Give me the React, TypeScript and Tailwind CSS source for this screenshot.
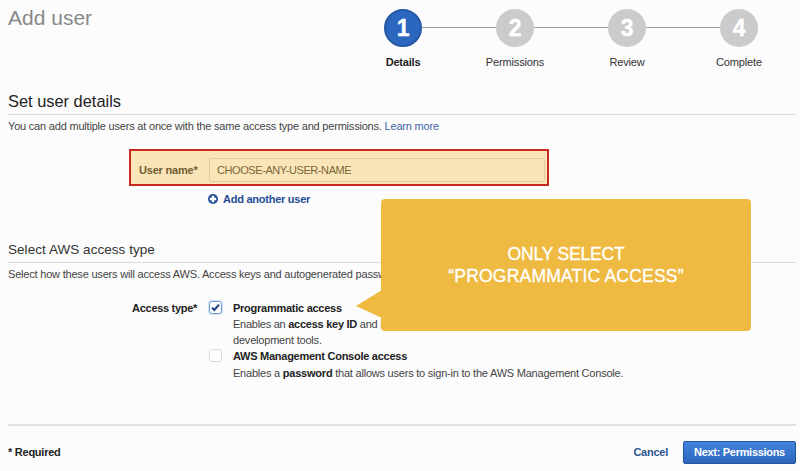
import React from 'react';

const steps = [
  { n: 1, label: 'Details', active: true },
  { n: 2, label: 'Permissions', active: false },
  { n: 3, label: 'Review', active: false },
  { n: 4, label: 'Complete', active: false },
];

function Stepper() {
  return (
    <ol className="flex">
      {steps.map((s, i) => (
        <li key={s.n} className="flex w-28 flex-col items-center">
          <div className="flex w-full items-center">
            <span className={i > 0 ? '-mt-px h-px flex-1 bg-[#999]' : 'h-px flex-1'} />
            <span
              className={
                s.active
                  ? 'flex size-[38px] items-center justify-center rounded-full border-2 border-[#2558a5] bg-[#2b67bf] text-[23px] font-bold text-white [-webkit-text-stroke:0.4px_white]'
                  : 'flex size-[38px] items-center justify-center rounded-full bg-[#cbcbcb] text-[23px] font-bold text-white [-webkit-text-stroke:0.4px_white]'
              }
            >
              {s.n}
            </span>
            <span className={i < steps.length - 1 ? '-mt-px h-px flex-1 bg-[#999]' : 'h-px flex-1'} />
          </div>
          <span className={s.active ? 'mt-[7px] leading-4 font-bold text-[#222]' : 'mt-[7px] leading-4 tracking-[-0.15px] text-[#333]'}>{s.label}</span>
        </li>
      ))}
    </ol>
  );
}

function CheckBox({ checked }: { checked: boolean }) {
  return (
    <span
      className={
        checked
          ? 'mt-px flex size-[13px] items-center justify-center rounded-[3px] border border-[#6f9ad6] bg-white shadow-[0_0_1px_1px_#d3e2f5]'
          : 'mt-px flex size-[13px] rounded-[3px] border border-[#d8d8d8] bg-white'
      }
    >
      {checked && (
        <svg viewBox="0 0 11 11" className="size-[11px]" fill="none" stroke="#1f3f87" strokeWidth="2">
          <path d="M2 5.8 4.3 8 9 2.6" />
        </svg>
      )}
    </span>
  );
}

function Callout() {
  return (
    <div className="absolute top-[199px] left-[381px] flex h-[132px] w-[370px] items-center justify-center rounded-[4px] bg-[#efba42] text-center text-[17.6px] leading-[22px] tracking-[0.15px] text-white [-webkit-text-stroke:0.3px_white]">
      <svg className="absolute top-[91px] -left-[25px] h-7 w-[26px]" viewBox="0 0 26 28" fill="#efba42">
        <path d="M0 16 26 0V28Z" />
      </svg>
      <p>
        <span className="tracking-[-0.25px]">ONLY SELECT</span>
        <br />
        “PROGRAMMATIC ACCESS”
      </p>
    </div>
  );
}

export default function App() {
  return (
    <div className="relative flex h-[471px] w-[800px] flex-col overflow-hidden bg-[#fcfcfc] pr-1 pl-2 font-['Liberation_Sans',Arial,sans-serif] text-[11px] tracking-[-0.2px] whitespace-nowrap text-[#444]">
      <header className="flex h-[91px] justify-between pt-[9px]">
        <h1 className="pt-px text-[21px] leading-4 tracking-normal text-[#888]">Add user</h1>
        <div className="mr-px">
          <Stepper />
        </div>
      </header>

      <section>
        <h2 className="h-[24px] border-b border-[#ddd] text-[16.4px] leading-5 tracking-normal text-[#222]">Set user details</h2>
        <p className="mt-[3px] leading-4">
          You can add multiple users at once with the same access type and permissions.{' '}
          <a className="text-[#3f66a8]">Learn more</a>
        </p>
        <div className="mt-[15px] ml-[121px] flex h-[37px] w-[420px] items-center border-2 border-[#c9281f] bg-[#fae5b8]">
          <label className="w-[78px] pt-[5px] pl-2 font-bold text-[#715b32]">User name*</label>
          <div className="mt-[5px] flex h-[24px] w-[336px] items-center rounded-[2px] border border-[#e0cb9c] pl-[7px] tracking-[-0.42px] text-[#7b6539]">
            CHOOSE-ANY-USER-NAME
          </div>
        </div>
        <div className="mt-[5px] ml-[200px] flex h-4 items-center gap-[5px] font-bold tracking-[-0.25px] text-[#1f4e96]">
          <svg viewBox="0 0 10 10" className="size-[10px]">
            <circle cx="5" cy="5" r="5" fill="currentColor" />
            <path d="M5 1.8V8.2M1.8 5H8.2" stroke="#fcfcfc" strokeWidth="2.4" />
          </svg>
          Add another user
        </div>
      </section>

      <section className="mt-[33px]">
        <h3 className="h-[23px] border-b border-[#ddd] text-[13.5px] leading-5 tracking-[0.05px] text-[#333]">Select AWS access type</h3>
        <p className="mt-[3px] leading-4">
          Select how these users will access AWS. Access keys and autogenerated passwords
        </p>
        <div className="mt-[18px] flex leading-4">
          <div className="w-[189px] text-right font-bold tracking-[-0.3px] text-[#222]">Access type*</div>
          <div className="ml-3 flex flex-col">
            <div className="flex gap-[11px]">
              <CheckBox checked />
              <div>
                <div className="font-bold tracking-[-0.26px] text-[#222]">Programmatic access</div>
                <p>
                  <span className="tracking-[-0.26px]">
                    Enables an <b className="text-[#222]">access key ID</b> and secret
                  </span>
                  <br />
                  development tools.
                </p>
              </div>
            </div>
            <div className="flex gap-[11px]">
              <CheckBox checked={false} />
              <div>
                <div className="font-bold tracking-[-0.26px] text-[#222]">AWS Management Console access</div>
                <p className="mt-px tracking-[-0.22px]">
                  Enables a <b className="text-[#222]">password</b> that allows users to sign-in to the AWS Management
                  Console.
                </p>
              </div>
            </div>
          </div>
        </div>
      </section>

      <footer className="mt-auto flex h-[47px] items-start border-t-2 border-[#e2e2e2] pt-[15px] font-bold tracking-[-0.25px]">
        <span className="pt-[3px] leading-4 text-[#222]">* Required</span>
        <a className="mt-[3px] ml-auto leading-4 text-[#2c5596]">Cancel</a>
        <button className="ml-[15px] flex h-[23px] w-[113px] items-center justify-center rounded-[2px] border border-[#24569f] bg-linear-to-b from-[#4484dc] to-[#2b66bd] pb-px tracking-[-0.3px] text-white">
          Next: Permissions
        </button>
      </footer>

      <Callout />
    </div>
  );
}
